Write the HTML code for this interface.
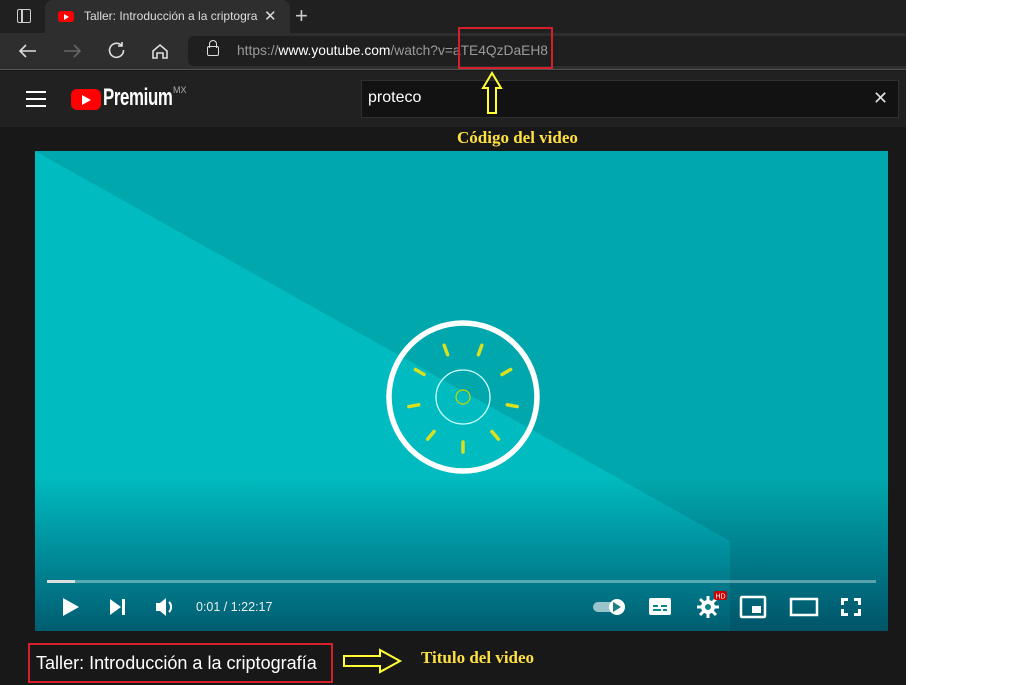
<!DOCTYPE html>
<html><head><meta charset="utf-8"><style>
*{margin:0;padding:0;box-sizing:border-box}
body{width:1011px;height:685px;background:#fff;position:relative;overflow:hidden;font-family:"Liberation Sans",sans-serif}
.a{position:absolute}
</style></head><body>
<div class="a" style="left:0;top:0;width:906px;height:685px;background:#181818"></div>
<div class="a" style="left:0;top:0;width:906px;height:33px;background:#202020"></div>
<div class="a" style="left:17px;top:9px;width:14px;height:14px;border:1.5px solid #ccc;border-radius:2px"></div>
<div class="a" style="left:21px;top:10px;width:1.5px;height:12px;background:#ccc"></div>
<div class="a" style="left:45px;top:0;width:245px;height:33px;background:#2e2e2e;border-radius:8px 8px 0 0"></div>
<div class="a" style="left:58px;top:11px;width:16px;height:11px;background:#f00;border-radius:3px"></div>
<div class="a" style="left:64px;top:13.5px;width:0;height:0;border-left:5px solid #fff;border-top:3px solid transparent;border-bottom:3px solid transparent"></div>
<div class="a" style="left:84px;top:9px;font-size:12px;color:#ddd;white-space:nowrap;width:175px;overflow:hidden">Taller: Introducción a la criptogra</div>
<div class="a" style="left:264px;top:7px;font-size:15px;color:#ddd">✕</div>
<div class="a" style="left:295px;top:3px;font-size:22px;color:#ccc;font-weight:300">+</div>
<div class="a" style="left:0;top:33px;width:906px;height:37px;background:#2e2e2e;border-bottom:1px solid #555"></div>
<svg class="a" style="left:14px;top:40px" width="170" height="22" viewBox="0 0 170 22" fill="none" stroke-width="1.6">
<path d="M22 11H6M12 5L6 11l6 6" stroke="#ddd"/>
<path d="M50 11h16M60 5l6 6-6 6" stroke="#666"/>
<path d="M108 6a7 7 0 1 0 1.5 4M108 2v4h-4" stroke="#ddd"/>
<path d="M139 11l7-6 7 6v7h-4v-5h-6v5h-4z" stroke="#ddd"/>
</svg>
<div class="a" style="left:188px;top:36px;width:718px;height:30px;background:#1f1f1f;border-radius:6px 0 0 6px"></div>
<div class="a" style="left:207px;top:46px;width:12px;height:10px;border:1.5px solid #ddd;border-radius:2px"></div>
<div class="a" style="left:209px;top:40px;width:8px;height:8px;border:1.5px solid #ddd;border-bottom:none;border-radius:4px 4px 0 0"></div>
<div class="a" style="left:237px;top:43px;font-size:13.8px;color:#9a9a9a;white-space:nowrap">https://<span style="color:#fff">www.youtube.com</span>/watch?v=aTE4QzDaEH8</div>
<div class="a" style="left:458px;top:27px;width:95px;height:42px;border:2px solid #d4202a"></div>
<div class="a" style="left:0;top:71px;width:906px;height:56px;background:#212121"></div>
<div class="a" style="left:26px;top:91px;width:20px;height:2px;background:#fff;box-shadow:0 7px 0 #fff,0 14px 0 #fff"></div>
<div class="a" style="left:71px;top:89px;width:30px;height:21px;background:#f00;border-radius:6px"></div>
<div class="a" style="left:82px;top:95px;width:0;height:0;border-left:9px solid #fff;border-top:5px solid transparent;border-bottom:5px solid transparent"></div>
<div class="a" style="left:103px;top:84px;font-size:24px;color:#fff;font-weight:bold;letter-spacing:-0.5px;transform:scaleX(.7);transform-origin:left">Premium</div>
<div class="a" style="left:173px;top:85px;font-size:9px;color:#aaa">MX</div>
<div class="a" style="left:361px;top:80px;width:538px;height:38px;background:#121212;border:1px solid #303030"></div>
<div class="a" style="left:368px;top:89px;font-size:16px;color:#fff">proteco</div>
<div class="a" style="left:873px;top:88px;font-size:18px;color:#ddd">✕</div>
<svg class="a" style="left:480px;top:70px" width="24" height="46"><path d="M12 3L3 18h5v25h8V18h5z" fill="none" stroke="#ffff33" stroke-width="2"/></svg>
<div class="a" style="left:457px;top:128px;font-family:'Liberation Serif',serif;font-weight:bold;font-size:17px;color:#ffe040">Código del video</div>
<svg class="a" style="left:35px;top:151px" width="853" height="480" viewBox="0 0 853 480">
<defs><linearGradient id="g" x1="0" y1="0" x2="0" y2="1"><stop offset=".68" stop-color="#003" stop-opacity="0"/><stop offset="1" stop-color="#002" stop-opacity=".5"/></linearGradient></defs>
<rect width="853" height="480" fill="#00a8ad"/>
<path d="M0 0L695 390L695 480L0 480Z" fill="#00bbbf"/>
<rect width="853" height="480" fill="url(#g)"/>
<circle cx="428" cy="246" r="74" fill="none" stroke="#fff" stroke-width="5.5"/>
<circle cx="428" cy="246" r="27" fill="none" stroke="#cff" stroke-width="1.3"/>
<circle cx="428" cy="246" r="7" fill="none" stroke="#c8d400" stroke-width="1.2"/>
<g stroke="#d8e020" stroke-width="3.5" stroke-linecap="round">
<line x1="428" y1="191" x2="428" y2="201" transform="rotate(20 428 246)"/>
<line x1="428" y1="191" x2="428" y2="201" transform="rotate(60 428 246)"/>
<line x1="428" y1="191" x2="428" y2="201" transform="rotate(100 428 246)"/>
<line x1="428" y1="191" x2="428" y2="201" transform="rotate(140 428 246)"/>
<line x1="428" y1="191" x2="428" y2="201" transform="rotate(180 428 246)"/>
<line x1="428" y1="191" x2="428" y2="201" transform="rotate(220 428 246)"/>
<line x1="428" y1="191" x2="428" y2="201" transform="rotate(260 428 246)"/>
<line x1="428" y1="191" x2="428" y2="201" transform="rotate(300 428 246)"/>
<line x1="428" y1="191" x2="428" y2="201" transform="rotate(340 428 246)"/>
</g>
<rect x="12" y="429" width="829" height="3" fill="#fff" opacity=".35"/>
<rect x="12" y="429" width="28" height="3" fill="#ddd"/>
<g fill="#fff">
<path d="M28 447l16 9-16 9z"/>
<path d="M75 448l11 8-11 8zM87 448h3v16h-3z"/>
<path d="M121 452h4l6-5v18l-6-5h-4z"/>
<path d="M134 451a7 7 0 0 1 0 10" stroke="#fff" stroke-width="2" fill="none"/>
<rect x="558" y="451" width="24" height="10" rx="5" opacity=".6"/>
<circle cx="582" cy="456" r="8"/>
<rect x="614" y="447" width="22" height="17" rx="2"/>
<rect x="706" y="446" width="24" height="20" rx="1" fill="none" stroke="#fff" stroke-width="2.5"/>
<rect x="717" y="455" width="9" height="7"/>
<rect x="756" y="448" width="26" height="16" fill="none" stroke="#fff" stroke-width="2.5"/>
<path d="M806 447h7v3h-4v4h-3zM819 447h7v7h-3v-4h-4zM806 458h3v4h4v3h-7zM823 458h3v7h-7v-3h4z"/>
<circle cx="673" cy="456" r="7"/>
</g>
<path d="M578 451l8 5-8 5z" fill="#1a7f80"/>
<path d="M618 455h5M626 455h6M618 459h8M628 459h4" stroke="#0a8588" stroke-width="2"/>
<g stroke="#fff" stroke-width="3"><path d="M673 445v22M662 456h22M665 448l16 16M681 448l-16 16"/></g>
<circle cx="673" cy="456" r="3" fill="#0a8588"/>
<rect x="679" y="440" width="13" height="9" rx="2" fill="#c00"/>
<text x="685.5" y="447.5" font-size="7" fill="#fff" text-anchor="middle" font-family="Liberation Sans">HD</text>
<text x="161" y="460" font-size="12.5" fill="#eee" font-family="Liberation Sans">0:01 / 1:22:17</text>
</svg>
<div class="a" style="left:28px;top:643px;width:305px;height:40px;border:2px solid #d4202a"></div>
<div class="a" style="left:36px;top:652px;font-size:18.5px;color:#fff;white-space:nowrap;transform:scaleX(.975);transform-origin:left">Taller: Introducción a la criptografía</div>
<svg class="a" style="left:342px;top:648px" width="62" height="26"><path d="M2 8h36V2l20 11-20 11v-6H2z" fill="none" stroke="#ffff33" stroke-width="2"/></svg>
<div class="a" style="left:421px;top:648px;font-family:'Liberation Serif',serif;font-weight:bold;font-size:17px;color:#ffe040">Titulo del video</div>
</body></html>
